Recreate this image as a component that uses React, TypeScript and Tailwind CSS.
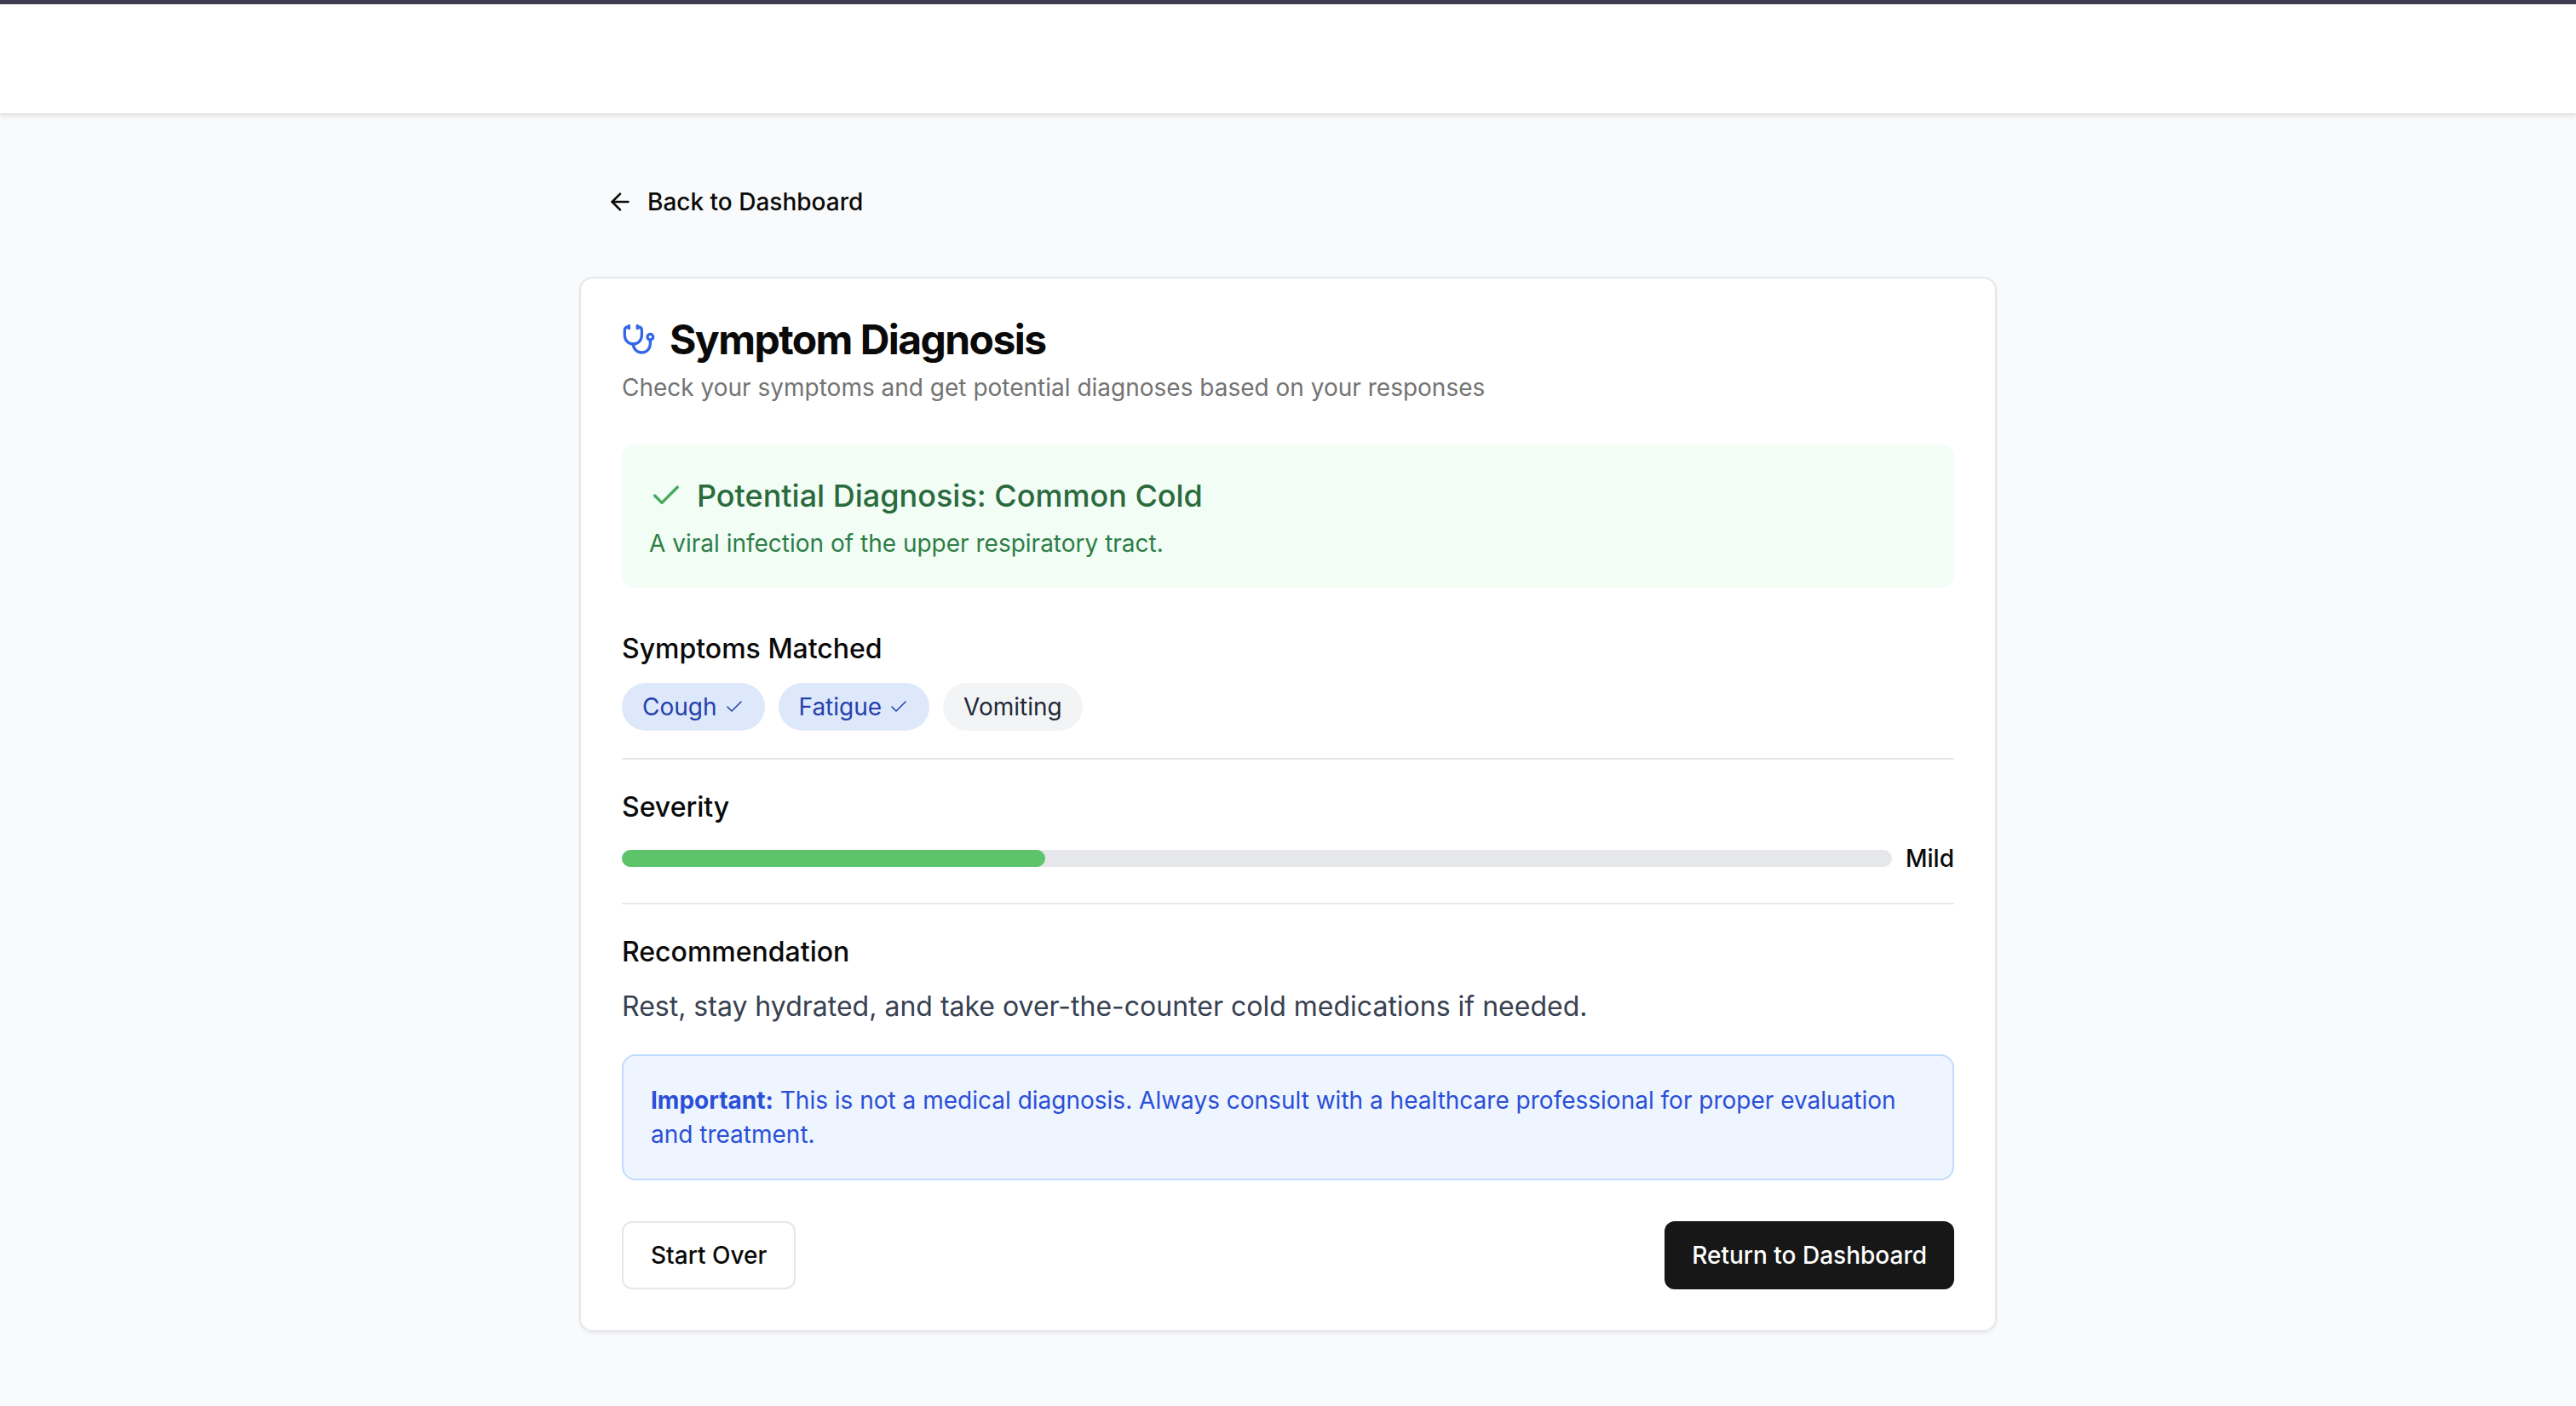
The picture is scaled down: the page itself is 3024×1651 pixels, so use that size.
import React from 'react';
import { ArrowLeft, Check, Stethoscope } from 'lucide-react';

const Divider = () => <div className="h-[2px] bg-[#e5e7eb]" />;

const Pill = ({ label, matched }: { label: string; matched?: boolean }) => (
  <span
    className={`flex h-[56px] items-center gap-[8px] rounded-full px-[24px] text-[28px] leading-[40px] ${
      matched ? 'bg-[#dde8fb] text-[#2441ab]' : 'bg-[#f3f4f6] text-[#1f2937]'
    }`}
  >
    {label}
    {matched && <Check size={24} strokeWidth={1.5} />}
  </span>
);

export default function App() {
  return (
    <div className="min-h-screen bg-[#f9fafb] font-['Inter',sans-serif] text-[#0a0a0a]">
      <header className="h-[133px] border-t-[5px] border-[#3f3a4f] bg-white shadow-[0_2px_6px_rgba(0,0,0,0.14)]" />

      <main className="mx-auto w-[1664px] pt-[64px]">
        <a className="mb-[48px] flex h-[80px] w-fit items-center gap-[16px] px-[32px] text-[28px] font-medium leading-[40px]">
          <ArrowLeft size={32} />
          Back to Dashboard
        </a>

        <section className="rounded-[16px] border-2 border-[#e5e7eb] bg-white p-[48px] shadow-[0_2px_4px_rgba(0,0,0,0.06)]">
          <div className="flex items-center gap-[16px]">
            <Stethoscope size={40} className="text-[#3268e8]" />
            <h1 className="text-[48px] font-bold leading-[48px] tracking-[-1.56px]">Symptom Diagnosis</h1>
          </div>
          <p className="mt-[12px] text-[28px] leading-[40px] text-[#737373]">
            Check your symptoms and get potential diagnoses based on your responses
          </p>

          <div className="mt-[47px] rounded-[16px] bg-[#f1fdf5] p-[32px]">
            <div className="flex items-center gap-[16px]">
              <Check size={40} className="text-[#46a85f]" />
              <h2 className="text-[36px] font-medium leading-[56px] text-[#2b6a3d]">Potential Diagnosis: Common Cold</h2>
            </div>
            <p className="mt-[8px] text-[28px] leading-[40px] text-[#2e7d46]">A viral infection of the upper respiratory tract.</p>
          </div>

          <h3 className="mt-[48px] text-[32px] font-medium leading-[48px]">Symptoms Matched</h3>
          <div className="mb-[32px] mt-[16px] flex gap-[16px]">
            <Pill label="Cough" matched />
            <Pill label="Fatigue" matched />
            <Pill label="Vomiting" />
          </div>
          <Divider />

          <h3 className="mt-[32px] text-[32px] font-medium leading-[48px]">Severity</h3>
          <div className="mb-[32px] mt-[16px] flex items-center gap-[16px]">
            <div className="h-[20px] flex-1 rounded-full bg-[#e5e7eb]">
              <div className="h-full w-1/3 rounded-full bg-[#5ec46c]" />
            </div>
            <span className="text-[28px] font-medium leading-[40px]">Mild</span>
          </div>
          <Divider />

          <h3 className="mt-[32px] text-[32px] font-medium leading-[48px]">Recommendation</h3>
          <p className="mt-[16px] text-[32px] leading-[48px] text-[#374151]">
            Rest, stay hydrated, and take over-the-counter cold medications if needed.
          </p>

          <div className="mt-[32px] rounded-[16px] border-2 border-[#bfdbfe] bg-[#eef5fe] p-[32px] text-[28px] leading-[40px] text-[#2b4fd8]">
            <strong className="font-bold">Important:</strong> This is not a medical diagnosis. Always consult with a healthcare professional for proper evaluation and treatment.
          </div>

          <div className="mt-[48px] flex justify-between">
            <button className="h-[80px] rounded-[12px] border-2 border-[#e5e7eb] bg-white px-[32px] text-[28px] font-medium">Start Over</button>
            <button className="h-[80px] rounded-[12px] bg-[#171717] px-[32px] text-[28px] font-medium text-white">Return to Dashboard</button>
          </div>
        </section>
      </main>
    </div>
  );
}
